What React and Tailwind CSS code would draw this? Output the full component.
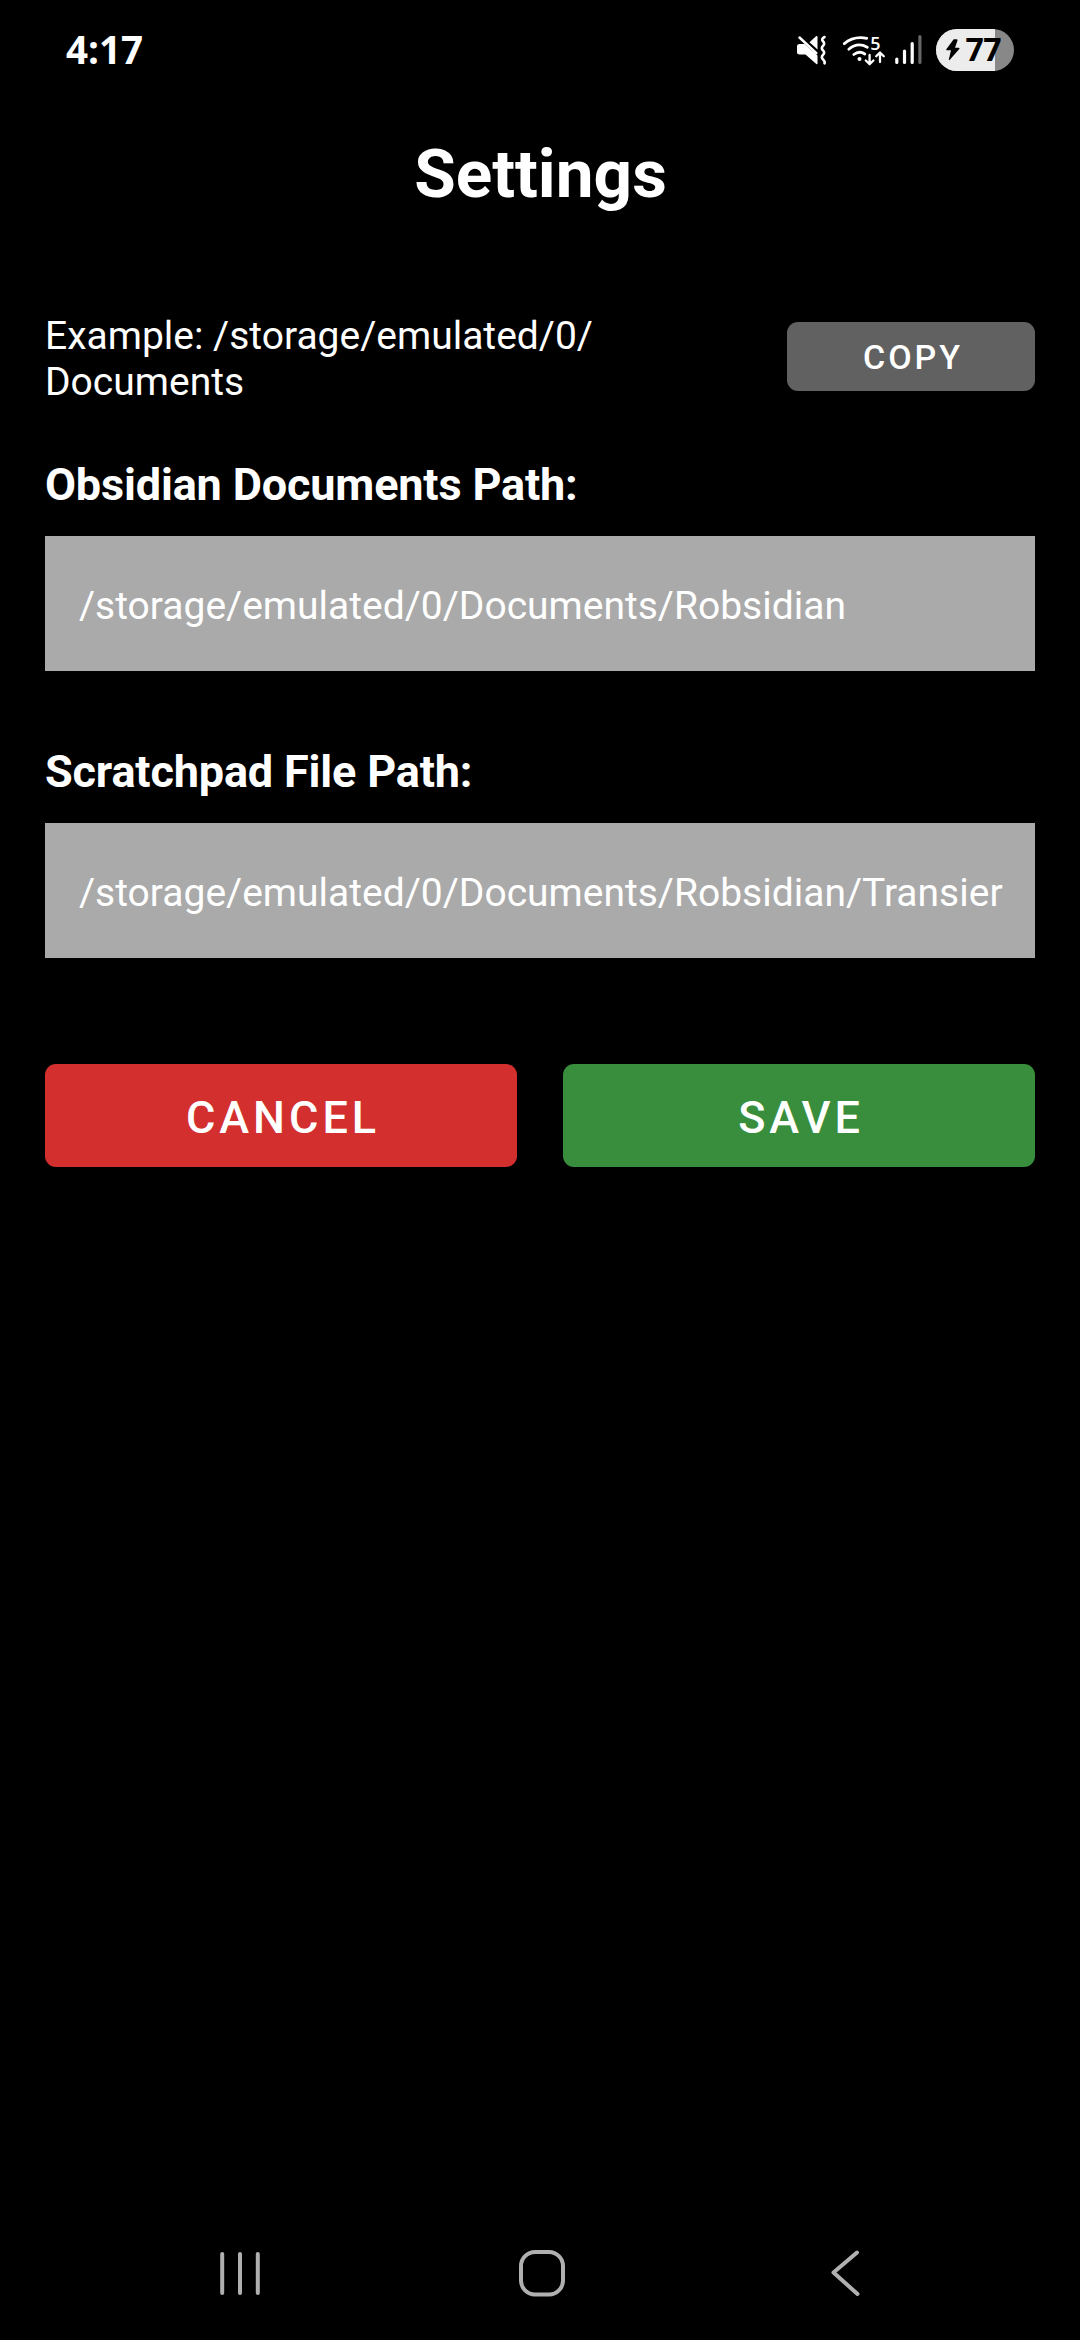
import React from "react";

function StatusIcons() {
  return (
    <svg className="h-[42px] w-[138px]" viewBox="795 29 138 42" fill="none">
      <path d="M797 46.500q0-2.500 2.500-2.500h5L817.500 55.500v8q0 1.300-1.200.4L805.500 54.500h-6q-2.500 0-2.500-2.500z" fill="#fff" />
      <path d="M809.500 42.300l6.500-6q1.500-1 1.500.6v12.600z" fill="#fff" />
      <path d="M799.500 37.500l16.800 15.700" stroke="#fff" strokeWidth="2.500" strokeLinecap="round" />
      <path
        d="M824.500 37q-3.800 2.200-1.500 4.300t0 4.500 0 4.600 0 4.500 0 4.500 1.500 4"
        stroke="#fff"
        strokeWidth="2.600"
        strokeLinecap="round"
        strokeLinejoin="round"
      />
      <g stroke="#fff" strokeWidth="2.800" strokeLinecap="round" strokeLinejoin="round">
        <path d="M844.200 43.700Q853.500 35.700 866.800 38.300" />
        <path d="M848.800 49.200Q857.500 41.800 867.300 47.200" />
        <path d="M853.800 54.500Q859.300 50.300 864.800 54" />
        <path d="M869.600 55v9M865.800 60.500l3.800 3.800 3.800-3.800M880 62v-9M876.200 56.300l3.800-3.800 3.800 3.800" strokeWidth="2.300" />
      </g>
      <circle cx="859.500" cy="59" r="2" fill="#fff" />
      <text x="870.300" y="49.500" fill="#fff" fontSize="18" fontWeight="600" fontFamily="Open Sans, sans-serif">5</text>
      <g strokeWidth="3.200" strokeLinecap="round" stroke="#fff">
        <path d="M896.800 59v3.500M904.500 51v11.500M912.200 43.500v19" />
        <path d="M919.900 36.500v26" stroke="#666" />
      </g>
    </svg>
  );
}

function Battery() {
  return (
    <div className="relative flex h-[42px] w-[78px] items-center overflow-hidden rounded-full bg-[#888888] text-black">
      <div className="absolute inset-y-0 left-0 w-[59px] bg-[#ececec]" />
      <svg className="relative -mt-[1px] ml-[9.500px] h-[22px] w-[14px] shrink-0" viewBox="0 0 14 22">
        <path d="M7.500 0.500L0.500 10q-.8 1.300.7 1.300H5L2.800 20.500q0 1.200 1 .3L13.300 10q.8-1.300-.7-1.300H9L11.500 1.500Q11.700.3 10.500.3H8z" fill="#000" />
      </svg>
      <span className="relative -mt-[2px] ml-[6px] font-['Open_Sans',sans-serif] text-[32px] font-bold leading-[42px] tracking-[-0.500px]">77</span>
    </div>
  );
}

function StatusBar() {
  return (
    <header className="flex h-[100px] items-center justify-between pl-[66px] pr-[66px]">
      <span className="-mt-[2px] font-['Open_Sans',sans-serif] text-[38.500px] font-bold leading-none">4:17</span>
      <div className="flex items-center gap-[3px]">
        <StatusIcons />
        <Battery />
      </div>
    </header>
  );
}

function PathField({ label, value }) {
  return (
    <section>
      <h2 className="text-[45px] font-bold leading-[53px] tracking-[-0.160px]">{label}</h2>
      <div className="mt-[25px] h-[135px] bg-[#aaaaaa] px-[34px] pt-[47px] text-[39px] leading-[46px]">
        <div className="whitespace-nowrap">{value}</div>
      </div>
    </section>
  );
}

function ActionButton({ color, children }) {
  return (
    <button
      className={`flex h-[103px] flex-1 items-center justify-center rounded-[11px] pl-[4px] pt-[3px] text-[45px] font-medium leading-[53px] tracking-[4px] ${color}`}
    >
      {children}
    </button>
  );
}

function NavBar() {
  return (
    <nav className="flex h-[135px] items-center px-[220px]">
      <svg className="h-[50px] w-[640px]" viewBox="220 2248 640 50" fill="none" stroke="#b0b0b0" strokeWidth="4" strokeLinecap="round">
        <path d="M222.200 2254v39M240 2254v39M257.800 2254v39" />
        <rect x="521" y="2252" width="42" height="42.500" rx="14" />
        <path d="M857 2252.500L833.500 2272.500L857.500 2294" strokeLinejoin="round" />
      </svg>
    </nav>
  );
}

export default function App() {
  return (
    <div className="flex h-[2340px] w-[1080px] flex-col bg-black font-['Roboto',sans-serif] text-white">
      <StatusBar />
      <main className="flex flex-1 flex-col px-[45px] pt-[34px]">
        <h1 className="pl-[1px] text-center text-[67.500px] font-bold leading-[80px]">Settings</h1>
        <div className="mt-[99px] flex items-start justify-between">
          <p className="text-[39px] leading-[46px]">
            Example: /storage/emulated/0/
            <br />
            Documents
          </p>
          <button className="mt-[9px] flex h-[69px] w-[248px] items-center justify-center rounded-[11px] bg-[#616161] pl-[4px] text-[34px] font-medium leading-[40px] tracking-[3px]">
            COPY
          </button>
        </div>
        <div className="mt-[53px] flex flex-col gap-[74px]">
          <PathField label="Obsidian Documents Path:" value="/storage/emulated/0/Documents/Robsidian" />
          <PathField label="Scratchpad File Path:" value="/storage/emulated/0/Documents/Robsidian/Transier" />
        </div>
        <div className="mt-[106px] flex gap-[46px]">
          <ActionButton color="bg-[#d32f2f]">CANCEL</ActionButton>
          <ActionButton color="bg-[#388e3c]">SAVE</ActionButton>
        </div>
      </main>
      <NavBar />
    </div>
  );
}
